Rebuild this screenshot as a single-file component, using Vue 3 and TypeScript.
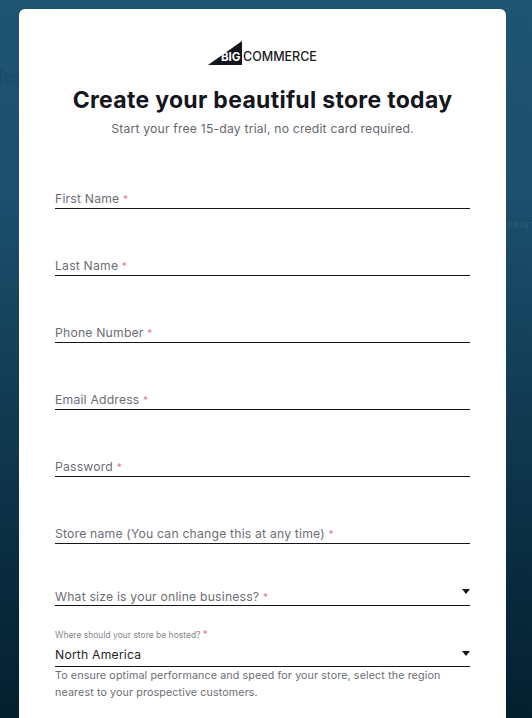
<script setup lang="ts">
const fields: string[] = [
  'First Name',
  'Last Name',
  'Phone Number',
  'Email Address',
  'Password',
  'Store name (You can change this at any time)',
]
</script>

<template>
  <div class="page">
    <span class="ghost ghost-left">des</span>
    <span class="ghost ghost-right">PRINT</span>
    <main class="card">
      <div class="logo">
        <svg class="logo-mark" width="34" height="24" viewBox="0 0 34 24" aria-hidden="true">
          <polygon points="0,24 34,0 34,24" fill="#15151d" />
        </svg>
        <span class="logo-big">BIG</span>
        <span class="logo-commerce">COMMERCE</span>
      </div>
      <h1 class="title">Create your beautiful store today</h1>
      <p class="subtitle">Start your free 15-day trial, no credit card required.</p>

      <form class="form">
        <div class="text-fields">
          <div v-for="f in fields" :key="f" class="field">
            <span class="label label-text">{{ f }} <em class="req">*</em></span>
          </div>
        </div>
        <div class="field field-size">
          <span class="label">What size is your online business? <em class="req">*</em></span>
          <i class="caret"></i>
        </div>
        <div class="hosted">
          <span class="mini-label">Where should your store be hosted? <em class="req">*</em></span>
          <div class="value-row">
            <span class="value">North America</span>
            <i class="caret caret-value"></i>
          </div>
          <p class="help">To ensure optimal performance and speed for your store, select the region nearest to your prospective customers.</p>
        </div>
      </form>
    </main>
  </div>
</template>

<style scoped>
.page {
  position: relative;
  width: 532px;
  height: 718px;
  overflow: hidden;
  padding: 9px 26px 0 19px;
  box-sizing: border-box;
  background: linear-gradient(180deg, #1e5472 0%, #1c4f6c 28%, #123c54 55%, #0a2c40 78%, #04202f 100%);
  font-family: Inter, "Noto Sans", sans-serif;
}
.ghost {
  position: absolute;
  color: #1a4a68;
  font-size: 18px;
}
.ghost-left { left: -8px; top: 66px; }
.ghost-right { left: 507px; top: 220px; font-size: 8px; color: #2a5d78; letter-spacing: 1px; }
.card {
  position: relative;
  height: 740px;
  background: #fff;
  border-radius: 6px;
  padding: 32px 36px 0;
  box-sizing: border-box;
}
.logo {
  position: relative;
  display: flex;
  align-items: flex-end;
  height: 24px;
  padding-left: 188px;
  color: #1b1b23;
}
.logo-mark {
  position: absolute;
  left: 153px;
  top: 0;
}
.logo-big {
  position: absolute;
  left: 166px;
  bottom: 1px;
  color: #fff;
  font-size: 11.5px;
  font-weight: 700;
  line-height: 13px;
}
.logo-commerce {
  font-size: 12.5px;
  font-weight: 500;
  line-height: 15px;
  margin-bottom: 1px;
}
.title {
  margin: 21px 0 0;
  text-align: center;
  font-size: 23px;
  line-height: 28px;
  font-weight: 700;
  letter-spacing: 0.3px;
  color: #15151d;
  white-space: nowrap;
}
.subtitle {
  margin: 7px 0 0;
  text-align: center;
  font-size: 12.2px;
  letter-spacing: 0.19px;
  line-height: 16px;
  color: #66676d;
}
.form {
  margin-top: 49px;
  display: flex;
  flex-direction: column;
}
.text-fields {
  display: flex;
  flex-direction: column;
  gap: 44px;
}
.field {
  position: relative;
  height: 22px;
  border-bottom: 1px solid #15151d;
  display: flex;
  align-items: center;
}
.field-size {
  margin-top: 39px;
}
.label {
  font-size: 12.2px;
  letter-spacing: 0.2px;
  line-height: 16px;
  color: #6d6e74;
  margin-top: 5px;
}
.label-text {
  margin-top: 4px;
}
.req {
  font-style: normal;
  color: #e27a90;
  font-size: 10px;
}
.caret {
  position: absolute;
  right: 0;
  top: 6px;
  width: 0;
  height: 0;
  border-left: 4.5px solid transparent;
  border-right: 4.5px solid transparent;
  border-top: 5px solid #15151d;
}
.hosted {
  margin-top: 23px;
}
.mini-label {
  display: block;
  font-size: 8.5px;
  line-height: 10px;
  color: #85868b;
}
.value-row {
  position: relative;
  height: 27px;
  padding-top: 2px;
  box-sizing: border-box;
  border-bottom: 1px solid #15151d;
  display: flex;
  align-items: center;
}
.value {
  font-size: 12.2px;
  letter-spacing: 0.2px;
  color: #1f1f27;
}
.caret-value {
  top: 11px;
}
.help {
  margin: 0;
  font-size: 10.7px;
  letter-spacing: 0.13px;
  line-height: 17px;
  color: #6d6e74;
}
</style>
